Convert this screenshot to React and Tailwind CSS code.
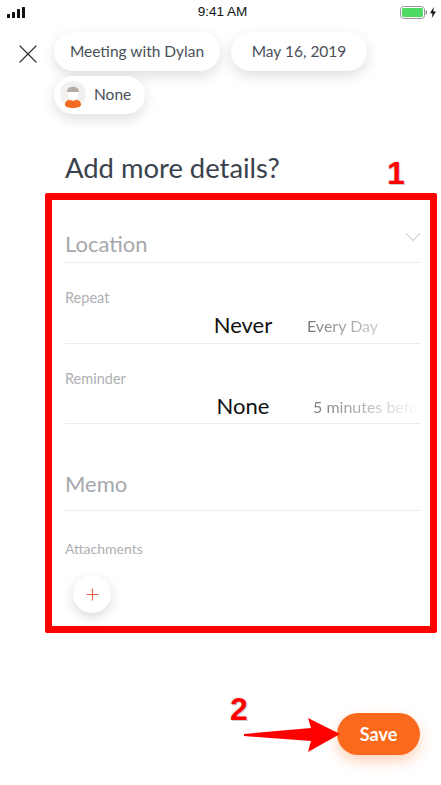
import React from 'react';
import { X, Plus, ChevronDown } from 'lucide-react';

const chip = 'bg-white rounded-full shadow-[0_5px_14px_rgba(0,0,0,0.13)] text-[#4a5058] text-[15.5px] flex items-center';

const StatusBar = () => (
    <div className="h-[24px] flex items-center justify-between pl-[7px] pr-[5px] font-['Liberation_Sans',sans-serif]">
        <svg width="18" height="11" viewBox="0 0 18 11" className="fill-[#111]">
            <rect x="0" y="7" width="3" height="4" rx="0.5" />
            <rect x="5" y="5" width="3" height="6" rx="0.5" />
            <rect x="10" y="2" width="3" height="9" rx="0.5" />
            <rect x="15" y="0" width="3" height="11" rx="0.5" />
        </svg>
        <span className="text-[13.5px] font-medium text-[#111] ml-[20px]">9:41 AM</span>
        <div className="flex items-center gap-[3px]">
            <svg width="27" height="13" viewBox="0 0 27 13">
                <rect x="0.5" y="0.5" width="24" height="12" rx="3" fill="none" stroke="#999" />
                <rect x="2" y="2" width="21" height="9" rx="1.5" fill="#4cd964" />
                <rect x="25.5" y="4.5" width="1.5" height="4" fill="#999" />
            </svg>
            <svg width="6" height="11" viewBox="0 0 6 11" className="fill-[#111]">
                <path d="M3.8 0 L0 6.2 H2.5 L1.8 11 L6 4.4 H3.3 Z" />
            </svg>
        </div>
    </div>
);

const Avatar = () => (
    <svg width="26" height="30" viewBox="0 0 26 30">
        <circle cx="13" cy="14" r="13" fill="#f1f0ef" />
        <path d="M7 12 C7 5 19 5 19 12 Z" fill="#b3aba5" />
        <path d="M8 12 H18 V16 C18 21 8 21 8 16 Z" fill="#ffffff" />
        <path d="M5 25 C5 20 9 19 13 21 C17 19 21 20 21 25 C21 29 5 29 5 25 Z" fill="#f26a1b" />
    </svg>
);

const Field = ({ label, selected, next, nextClass, height }) => (
    <div className={`border-b border-[#ececec] flex flex-col ${height}`}>
        <div className="text-[14.5px] text-[#aeb0b3] mt-[26px] leading-[18px]">{label}</div>
        <div className="relative h-[26px] mt-[5px] overflow-hidden">
            <span className="absolute left-[178px] -translate-x-1/2 top-0 text-[22px] leading-[26px] text-[#111]">{selected}</span>
            <span className={`absolute top-[2px] text-[16px] leading-[24px] whitespace-nowrap bg-gradient-to-r bg-clip-text text-transparent ${nextClass}`}>{next}</span>
        </div>
    </div>
);

const App = () => {
    return (
        <div className="relative w-[441px] h-[785px] bg-white overflow-hidden font-['Lato',sans-serif]">
            <StatusBar />

            <div className="flex pl-[12px] pt-[8px]">
                <X className="w-[32px] h-[32px] mt-[6px] text-[#333] shrink-0" strokeWidth={0.9} />
                <div className="ml-[10px] flex flex-wrap gap-x-[11px] gap-y-[5px] w-[340px]">
                    <div className={`${chip} h-[39px] w-[166px] justify-center`}>Meeting with Dylan</div>
                    <div className={`${chip} h-[39px] w-[136px] justify-center`}>May 16, 2019</div>
                    <div className={`${chip} h-[38px] w-[91px] pl-[6px] gap-[8px]`}>
                        <Avatar />
                        <span className="text-[#4a5058] pb-[1px]">None</span>
                    </div>
                </div>
            </div>

            <div className="pl-[65px] pr-[21px]">
                <h1 className="text-[27.4px] leading-[32px] text-[#39424c] mt-[38px]">Add more details?</h1>

                <div className="mt-[44px] relative border-b border-[#ececec] h-[35px] pt-[2px]">
                    <span className="block text-[22px] leading-[28px] text-[#a5a8ab]">Location</span>
                    <ChevronDown className="absolute right-[-7px] top-[-5px] w-[28px] h-[28px] text-[#c4c6c8]" strokeWidth={0.9} />
                </div>

                <Field label="Repeat" selected="Never" next="Every Day" height="h-[81px]" nextClass="left-[242px] from-[#777] to-[#ccc]" />
                <Field label="Reminder" selected="None" next="5 minutes before" height="h-[80px]" nextClass="left-[248px] w-[107px] overflow-hidden from-[#777] to-[#fff]" />

                <div className="mt-[46px] border-b border-[#ececec] h-[41px]">
                    <span className="text-[22px] leading-[28px] text-[#a5a8ab]">Memo</span>
                </div>

                <div className="text-[14px] leading-[18px] text-[#aeb0b3] mt-[29px]">Attachments</div>

                <button className="mt-[17px] ml-[8px] w-[38px] h-[38px] rounded-full bg-white shadow-[0_4px_12px_rgba(0,0,0,0.15)] flex items-center justify-center">
                    <Plus className="w-[19px] h-[19px] text-[#e0604a]" strokeWidth={1.4} />
                </button>
            </div>

            <button className="absolute left-[337px] top-[713px] w-[83px] h-[42px] rounded-full bg-[#fb6a1c] text-white text-[18px] font-bold shadow-[0_6px_14px_rgba(251,106,28,0.3)]">
                Save
            </button>

            {/* annotations on top of the screenshot */}
            <div className="absolute left-[45px] top-[193px] w-[392px] h-[440px] border-[7px] border-[#ff0000] rounded-[2px]" />
            <span className="absolute left-[387px] top-[155px] text-[32px] leading-[36px] font-bold text-[#ff0000] font-['Liberation_Sans',sans-serif] [text-shadow:1px_1px_0_#ccc,-1px_-1px_0_#eee]">1</span>
            <span className="absolute left-[230px] top-[691px] text-[32px] leading-[36px] font-bold text-[#ff0000] font-['Liberation_Sans',sans-serif] [text-shadow:1px_1px_0_#ccc,-1px_-1px_0_#eee]">2</span>
            <svg className="absolute left-[243px] top-[718px]" width="100" height="36" viewBox="0 0 100 36">
                <path d="M1 16 L68 10 L65 0 L97 16 L65 34 L68 23 L1 18 Z" fill="#ff0000" />
            </svg>
        </div>
    );
};

export default App;
